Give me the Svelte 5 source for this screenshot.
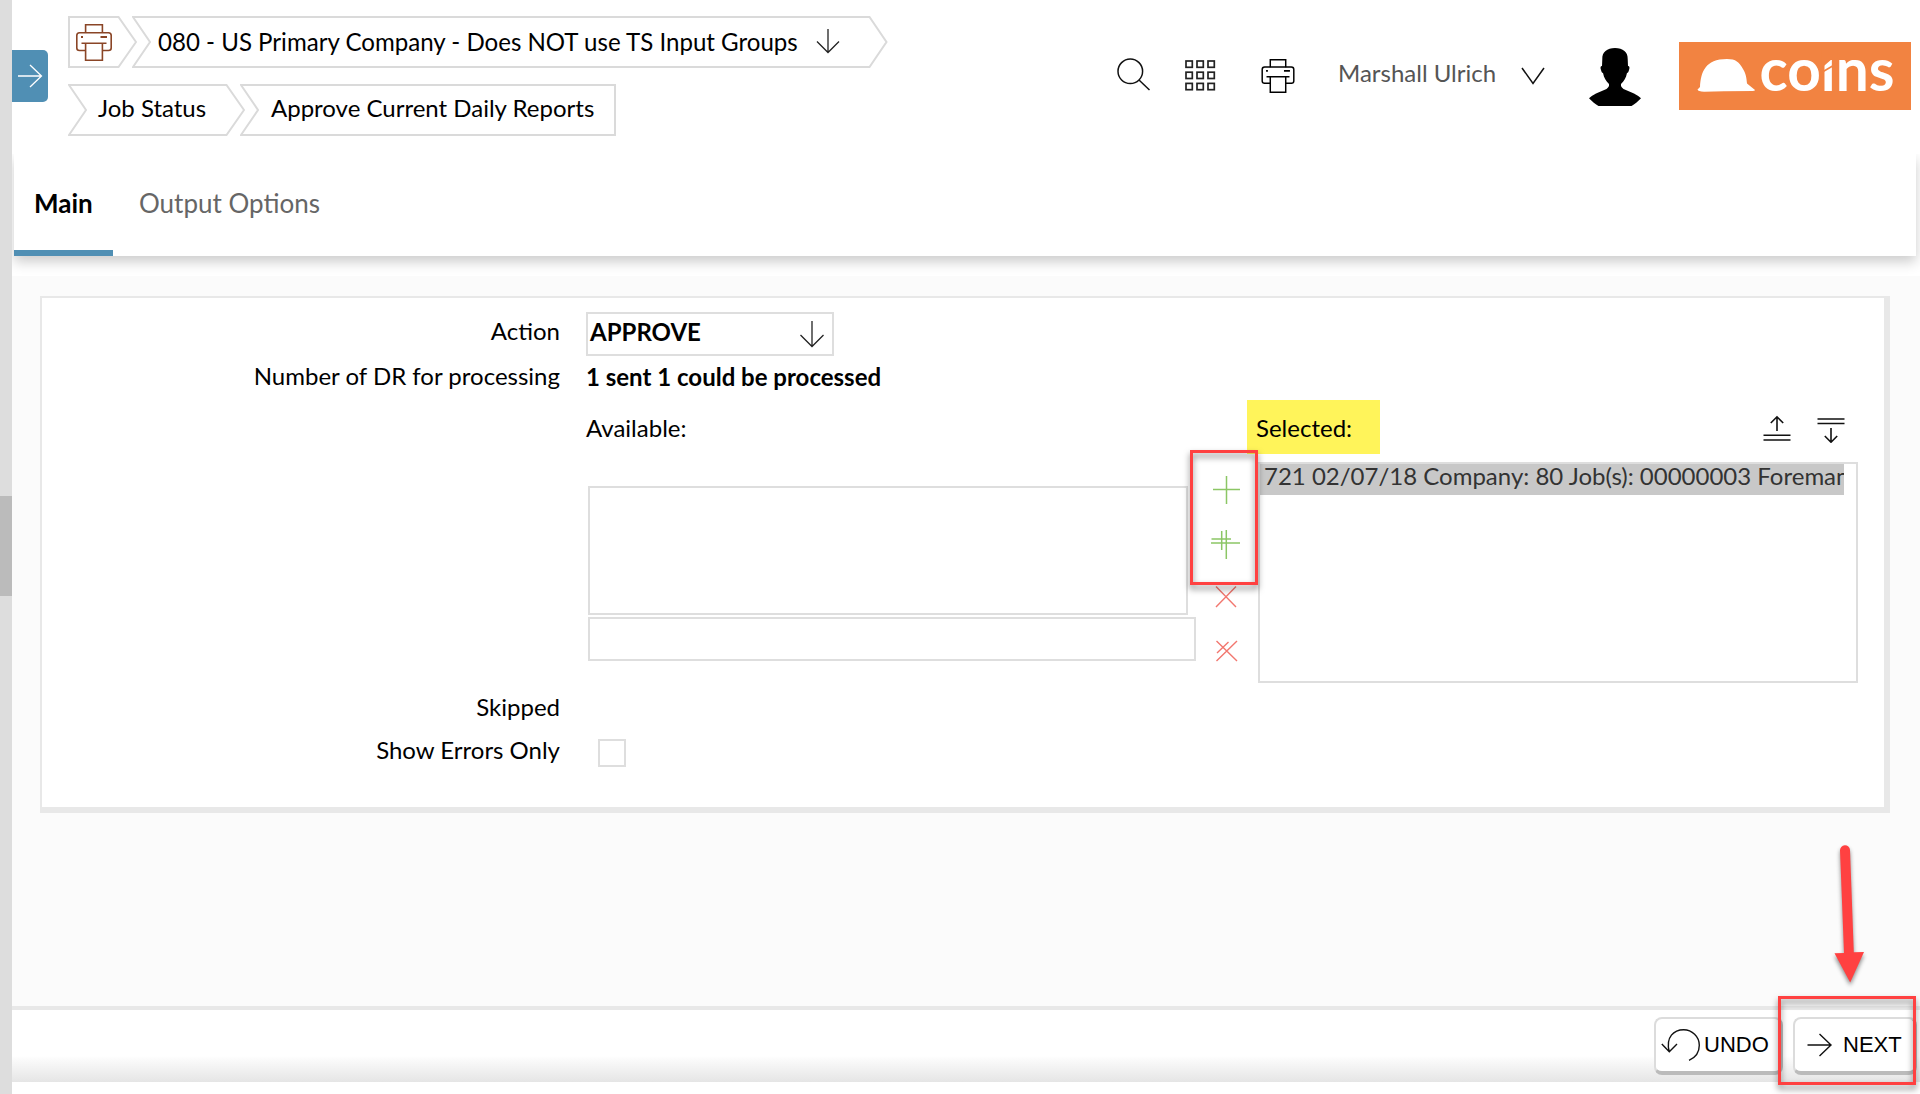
<script>
  const controls = [
    { name: 'Add', kind: 'add', d: 'M15.5 13V41M2 26.5H29' },
    { name: 'Add all', kind: 'add', d: 'M15.3 13V42M0 26H29M10.7 14V33M0.5 22H20' },
    { name: 'Remove', kind: 'remove', d: 'M5 15.5L25 36M25 15.5L5 36' },
    { name: 'Remove all', kind: 'remove', d: 'M5.5 16L26 36M26 16L5.5 36M6 28L17.5 17' }
  ];
  const gridCells = [0, 1, 2].flatMap((r) => [0, 1, 2].map((c) => ({ x: 1 + c * 11, y: 1 + r * 11.2 })));
  const options = ['721 02/07/18 Company: 80 Job(s): 00000003 Foreman'];
</script>

{#snippet printer(cls)}
  <svg class={cls} viewBox="0 0 36 37" fill="none" stroke="currentColor" stroke-width="1.6">
    <path d="M9.6 9V0.8H26.4V9" />
    <path d="M9.6 26.5H3.5Q0.8 26.5 0.8 24V11.5Q0.8 8.8 3.5 8.8H32.5Q35.2 8.8 35.2 11.5V24Q35.2 26.5 32.5 26.5H26.4" />
    <path d="M5.5 19.2H30.5M9.6 19.2V36.2H26.4V19.2" />
    <path d="M5 13H7M24.5 13H31" stroke-width="1.8" />
  </svg>
{/snippet}

<div class="app">
  <aside class="rail"><div class="thumb"></div></aside>

  <div class="page">
    <header class="top">
      <button class="expand" aria-label="Expand menu">
        <svg width="26" height="26" viewBox="0 0 26 26" fill="none" stroke="#fff" stroke-width="1.3"><path d="M1 13H24.5M13 2L24.5 13L13 24" /></svg>
      </button>

      <nav class="crumbs">
        <div class="crumb-row">
          <div class="crumb home">
            <svg class="outline" width="69" height="52" viewBox="0 0 69 52"><path d="M1 1H50.5L68 26L50.5 51H1Z" /></svg>
            {@render printer('crumb-printer')}
          </div>
          <div class="crumb company">
            <svg class="outline" width="756" height="52" viewBox="0 0 756 52"><path d="M1 1H737.5L754.5 26L737.5 51H1L18 26Z" /></svg>
            <span>080 - US Primary Company - Does NOT use TS Input Groups</span>
            <svg class="drop" width="24" height="26" viewBox="0 0 24 26" fill="none" stroke="#222" stroke-width="1.3"><path d="M12 1V25M1 13.5L12 24.5L23 13.5" /></svg>
          </div>
        </div>
        <div class="crumb-row second">
          <div class="crumb job">
            <svg class="outline" width="177" height="52" viewBox="0 0 177 52"><path d="M1 1H158.5L176 26L158.5 51H1L18 26Z" /></svg>
            <span>Job Status</span>
          </div>
          <div class="crumb approve">
            <svg class="outline" width="376" height="52" viewBox="0 0 376 52"><path d="M1 1H375V51H1L18 26Z" /></svg>
            <span>Approve Current Daily Reports</span>
          </div>
        </div>
      </nav>

      <div class="tools">
        <svg class="search" width="34" height="34" viewBox="0 0 34 34" fill="none" stroke="#111" stroke-width="1.5"><circle cx="13.3" cy="13.3" r="12.3" /><path d="M22 22L32.5 32" /></svg>
        <svg class="grid" width="31" height="31" viewBox="0 0 31 31" fill="none" stroke="#222" stroke-width="1.7">
          {#each gridCells as cell}<rect x={cell.x} y={cell.y} width="6.3" height="6.3" />{/each}
        </svg>
        {@render printer('tool-printer')}
        <span class="user">Marshall Ulrich</span>
        <svg class="chevron" width="24" height="18" viewBox="0 0 24 18" fill="none" stroke="#111" stroke-width="1.5"><path d="M1 1L12 16.5L23 1" /></svg>
        <svg class="avatar" width="52" height="58" viewBox="0 0 52 58"><path d="M26 0C18 0 13 4 13.300 11L13 18C11.300 18 11.200 20 12 22C12.500 24 13 25 14 25C15 30 17 33 20 36C20.300 38 19.500 39.500 17.500 41L7 45.500C4 47 2 48.500 0 50.300C3 53.500 6.500 56.500 9.500 58H42.500C45.500 56.500 49 53.500 52 50.300C50 48.500 48 47 45 45.500L34.500 41C32.500 39.500 31.700 38 32 36C35 33 37 30 38 25C39 25 39.500 24 40 22C40.800 20 40.700 18 39 18L38.700 11C39 4 34 0 26 0Z" /></svg>
        <svg class="logo" width="232" height="68" viewBox="0 0 232 68">
          <rect width="232" height="68" fill="#f28341" />
          <path fill="#fff" d="M18.500 47.500L21 45C22 30 26 17 48 17C57 17 60 20 64 27C67 32 67.500 36 68 41.500L76 48Q76 49 73.500 49L45 49.300L25 49.700Q19 49.500 18.500 47.500Z" />
          <text x="80.500" y="49" textLength="135" lengthAdjust="spacingAndGlyphs">coins</text>
          <!-- the i carries a slanted notch in place of its dot -->
          <path fill="#f28341" d="M142.500 3H158.500V17H153L142.500 26Z" />
          <path stroke="#f28341" stroke-width="1.600" d="M142.500 30.500L157 22" />
        </svg>
      </div>
    </header>

    <div class="tabs">
      <div class="tab active">Main</div>
      <div class="tab">Output Options</div>
    </div>

    <main class="content">
      <section class="panel">
        <div class="row action">
          <span class="label">Action</span>
          <div class="select">
            <span>APPROVE</span>
            <svg width="26" height="28" viewBox="0 0 26 28" fill="none" stroke="#222" stroke-width="1.3"><path d="M13 0V25.500M1.500 14L13 25.500L24.500 14" /></svg>
          </div>
        </div>
        <div class="row count">
          <span class="label">Number of DR for processing</span>
          <strong>1 sent 1 could be processed</strong>
        </div>
        <div class="row lists">
          <span class="label"></span>
          <div class="available">
            <div class="caption">Available:</div>
            <div class="box"></div>
            <div class="filter"></div>
          </div>
          <div class="controls">
            {#each controls as c}
              <svg class={c.kind} width="32" height="54" viewBox="0 0 32 54" role="img" aria-label={c.name}><path d={c.d} /></svg>
            {/each}
            <div class="callout add-callout"></div>
          </div>
          <div class="selected">
            <div class="selected-head">
              <span class="mark">Selected:</span>
              <svg width="28" height="28" viewBox="0 0 28 28" fill="none" stroke="#111" stroke-width="1.6"><path d="M0.500 20.200H27.500M0.500 25H27.500M14 2V16M7.800 8L14 1.800L20.200 8" /></svg>
              <svg width="28" height="28" viewBox="0 0 28 28" fill="none" stroke="#111" stroke-width="1.6"><path d="M0.500 4H27.500M0.500 8.500H27.500M14 13V27M7.800 21L14 27.200L20.200 21" /></svg>
            </div>
            <div class="listbox">
              {#each options as o}<div class="option">{o}</div>{/each}
            </div>
          </div>
        </div>
        <div class="row skipped"><span class="label">Skipped</span></div>
        <div class="row errors">
          <span class="label">Show Errors Only</span>
          <div class="checkbox"></div>
        </div>
      </section>
    </main>

    <footer class="bar">
      <button class="btn undo">
        <svg width="40" height="34" viewBox="0 0 40 34" fill="none" stroke="#111" stroke-width="1.4"><path d="M8.200 23.500C4.500 9 13 1.700 22.700 1.700C31 1.700 38.300 8.500 38.300 17.200C38.300 24 34.500 29.500 28 32.300M0.800 16L8.300 23.700L16 16" /></svg>
        UNDO
      </button>
      <button class="btn next">
        <svg width="26" height="24" viewBox="0 0 26 24" fill="none" stroke="#111" stroke-width="1.4"><path d="M0.500 12H24M12.500 1L24 12L12.500 23" /></svg>
        NEXT
      </button>
      <div class="callout next-callout"></div>
      <svg class="pointer" width="50" height="150" viewBox="0 0 50 150"><path d="M20 10.500A5 5 0 0 1 30 10L33.800 112.300L44 112L30.200 142.500L14.500 113.300L24 113Z" fill="#ff4141" /></svg>
    </footer>
  </div>
</div>

<style>
  :global(body) { margin: 0; background: #fff; }
  .app { display: flex; width: 1920px; height: 1094px; overflow: hidden; font: 24px Lato, "Open Sans", sans-serif; color: #000; }
  .app * { box-sizing: border-box; }
  svg { display: block; flex: none; }
  button { font: inherit; color: inherit; margin: 0; padding: 0; border: 0; }

  .rail { flex: none; width: 12px; background: #ddd; padding-top: 496px; }
  .thumb { height: 100px; background: #bbb; }
  .page { flex: none; width: 1908px; display: flex; flex-direction: column; }

  .top { flex: none; height: 154px; display: flex; align-items: flex-start; }
  .expand { flex: none; width: 36px; height: 52px; margin-top: 50px; background: #508fb4; border-radius: 0 5px 5px 0; display: flex; align-items: center; justify-content: center; padding-right: 1px; }
  .crumbs { flex: none; width: 840px; padding: 16px 0 0 20px; }
  .crumb-row { display: flex; height: 52px; margin-bottom: 16px; white-space: nowrap; }
  .crumb { position: relative; display: flex; line-height: 51px; height: 52px; }
  .second .crumb { line-height: 47px; }
  .outline { position: absolute; left: 0; top: 0; fill: #fff; stroke: #dadada; stroke-width: 2; }
  .crumb span { position: relative; }
  .home { width: 64px; padding: 8px 0 0 8px; }
  .home :global(.crumb-printer) { position: relative; width: 36px; height: 37px; color: #8a4526; }
  .company { padding-left: 26px; font-size: 24.08px; }
  .drop { position: relative; margin: 12px 0 0 18px; }
  .job { width: 172px; padding-left: 30px; }
  .approve { padding-left: 31px; }

  .tools { display: flex; align-items: flex-start; padding-left: 229px; }
  .search { margin-top: 58px; }
  .grid { margin: 60px 0 0 34px; }
  .tools :global(.tool-printer) { width: 34px; height: 34px; margin: 59px 0 0 45px; }
  .user { margin-left: 43px; line-height: 51px; padding-top: 47px; color: #555; width: 160px; white-space: nowrap; }
  .chevron { margin: 67px 0 0 23px; }
  .avatar { margin: 48px 0 0 44px; }
  .logo { margin: 42px 0 0 38px; }
  .logo text { font: 700 60px Lato, sans-serif; fill: #fff; }

  .tabs { flex: none; position: relative; z-index: 1; height: 102px; margin: 0 4px 0 2px; display: flex; background: #fff; box-shadow: 0 6px 12px rgba(0, 0, 0, 0.2); clip-path: inset(0 -4px -20px -2px); font-size: 26px; line-height: 98px; }
  .tab { height: 102px; padding: 0 20px; color: #666; margin-left: 6px; }
  .tab.active { width: 99px; margin: 0; padding: 0 0 0 20px; color: #000; font-weight: 700; border-bottom: 6px solid #508fb4; }

  .content { flex: none; height: 730px; margin-top: 20px; background: #fbfbfb; padding: 20px 0 0 28px; }
  .panel { width: 1850px; height: 517px; background: #fff; border: 2px solid #e8e8e8; border-width: 2px 6px 6px 2px; padding-top: 14px; }
  .row { display: flex; align-items: flex-start; white-space: nowrap; }
  .label { flex: none; width: 518px; margin-right: 26px; text-align: right; }
  .action { height: 44px; line-height: 37px; }
  .select { width: 248px; height: 44px; border: 2px solid #dedede; padding: 0 7px 0 2px; display: flex; justify-content: space-between; line-height: 35px; font-weight: 700; }
  .select svg { margin-top: 7px; }
  .count { height: 44px; line-height: 39px; }
  .count strong { line-height: 41px; }
  .lists { height: 290px; }
  .available { width: 610px; padding-left: 2px; }
  .caption { height: 86px; line-height: 55px; margin-left: -2px; }
  .box { width: 600px; height: 129px; border: 2px solid #dedede; }
  .filter { height: 44px; margin-top: 2px; border: 2px solid #dedede; }
  .controls { position: relative; width: 62px; padding: 63px 0 0 15px; }
  .add path { fill: none; stroke: #8cc665; stroke-width: 1.5; }
  .remove path { fill: none; stroke: #f2776f; stroke-width: 1.4; }
  .selected { width: 600px; }
  .selected-head { display: flex; height: 62px; padding-right: 13px; }
  .mark { width: 133px; height: 54px; margin: 0 auto 0 -11px; padding-left: 9px; background: #fff45a; line-height: 55px; }
  .selected-head svg { margin: 15px 0 0 26px; }
  .listbox { height: 221px; border: 2px solid #dedede; }
  .option { height: 31px; margin-right: 12px; padding-left: 4px; line-height: 23px; background: #c8c8c8; color: #333; overflow: hidden; }
  .skipped { height: 43px; line-height: 33px; }
  .errors { height: 60px; line-height: 33px; }
  .checkbox { width: 28px; height: 28px; margin: 6px 0 0 12px; border: 2px solid #dedede; }

  .bar { flex: none; position: relative; height: 76px; border-top: 4px solid #e8e8e8; background: linear-gradient(#fff 46px, #fafafa 50px, #e5e5e5 72px); display: flex; }
  .btn { height: 58px; margin-top: 7px; display: flex; align-items: center; background: #fff; border: 2px solid #dcdcdc; border-bottom: 4px solid #bbb; border-radius: 8px; font: 22px "Liberation Sans", Arial, sans-serif; white-space: nowrap; }
  .undo { margin-left: 1642px; width: 129px; padding-left: 5px; gap: 3px; border-right: 3px solid #bbb; }
  .next { margin-left: 10px; width: 124px; padding-left: 12px; gap: 10px; border-right: 3px solid #bbb; }

  .callout { position: absolute; border: 3px solid #ff4141; filter: drop-shadow(0 4px 3px rgba(0, 0, 0, 0.5)); }
  .add-callout { left: -6px; top: 50px; width: 68px; height: 135px; }
  .next-callout { left: 1766px; top: -14px; width: 138px; height: 89px; }
  .pointer { position: absolute; left: 1808px; top: -170px; overflow: visible; filter: drop-shadow(0 3px 2px rgba(0, 0, 0, 0.45)); }
</style>
